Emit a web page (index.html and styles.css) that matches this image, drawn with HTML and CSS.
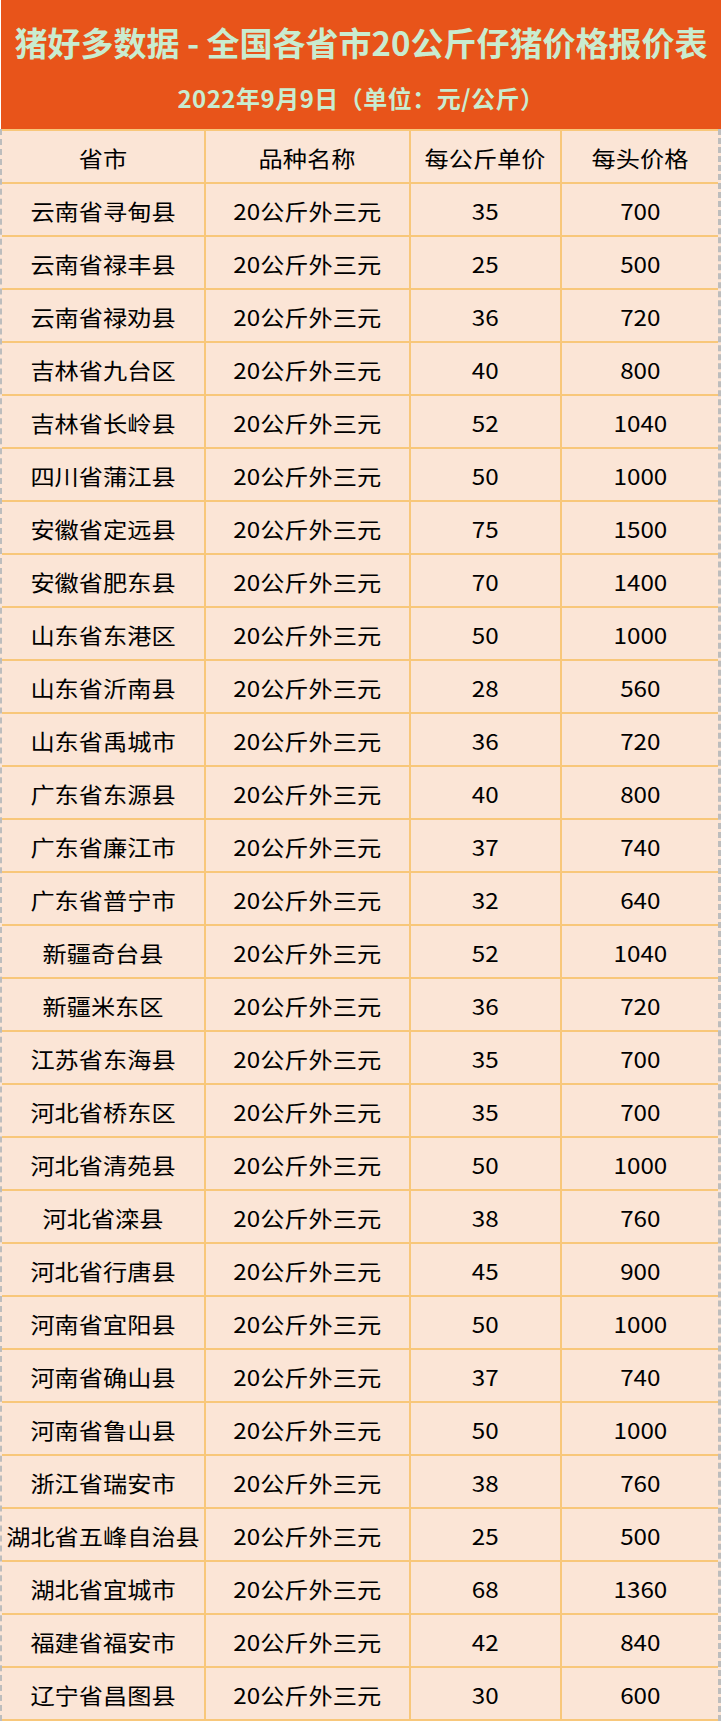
FILE: index.html
```html
<!DOCTYPE html>
<html lang="zh-CN">
<head>
<meta charset="utf-8">
<title>猪好多数据 - 全国各省市20公斤仔猪价格报价表</title>
<link rel="stylesheet" href="styles.css">
</head>
<body>
<div class="page">
  <header class="banner">
    <div class="title">猪好多数据 - 全国各省市20公斤仔猪价格报价表</div>
    <div class="subtitle">2022年9月9日（单位：元/公斤）</div>
  </header>
  <div class="sheet">
    <div class="grid">
      <div class="cell"><span>省市</span></div>
      <div class="cell"><span>品种名称</span></div>
      <div class="cell"><span>每公斤单价</span></div>
      <div class="cell"><span>每头价格</span></div>

      <div class="cell"><span>云南省寻甸县</span></div><div class="cell"><span>20公斤外三元</span></div><div class="cell"><span>35</span></div><div class="cell"><span>700</span></div>
      <div class="cell"><span>云南省禄丰县</span></div><div class="cell"><span>20公斤外三元</span></div><div class="cell"><span>25</span></div><div class="cell"><span>500</span></div>
      <div class="cell"><span>云南省禄劝县</span></div><div class="cell"><span>20公斤外三元</span></div><div class="cell"><span>36</span></div><div class="cell"><span>720</span></div>
      <div class="cell"><span>吉林省九台区</span></div><div class="cell"><span>20公斤外三元</span></div><div class="cell"><span>40</span></div><div class="cell"><span>800</span></div>
      <div class="cell"><span>吉林省长岭县</span></div><div class="cell"><span>20公斤外三元</span></div><div class="cell"><span>52</span></div><div class="cell"><span>1040</span></div>
      <div class="cell"><span>四川省蒲江县</span></div><div class="cell"><span>20公斤外三元</span></div><div class="cell"><span>50</span></div><div class="cell"><span>1000</span></div>
      <div class="cell"><span>安徽省定远县</span></div><div class="cell"><span>20公斤外三元</span></div><div class="cell"><span>75</span></div><div class="cell"><span>1500</span></div>
      <div class="cell"><span>安徽省肥东县</span></div><div class="cell"><span>20公斤外三元</span></div><div class="cell"><span>70</span></div><div class="cell"><span>1400</span></div>
      <div class="cell"><span>山东省东港区</span></div><div class="cell"><span>20公斤外三元</span></div><div class="cell"><span>50</span></div><div class="cell"><span>1000</span></div>
      <div class="cell"><span>山东省沂南县</span></div><div class="cell"><span>20公斤外三元</span></div><div class="cell"><span>28</span></div><div class="cell"><span>560</span></div>
      <div class="cell"><span>山东省禹城市</span></div><div class="cell"><span>20公斤外三元</span></div><div class="cell"><span>36</span></div><div class="cell"><span>720</span></div>
      <div class="cell"><span>广东省东源县</span></div><div class="cell"><span>20公斤外三元</span></div><div class="cell"><span>40</span></div><div class="cell"><span>800</span></div>
      <div class="cell"><span>广东省廉江市</span></div><div class="cell"><span>20公斤外三元</span></div><div class="cell"><span>37</span></div><div class="cell"><span>740</span></div>
      <div class="cell"><span>广东省普宁市</span></div><div class="cell"><span>20公斤外三元</span></div><div class="cell"><span>32</span></div><div class="cell"><span>640</span></div>
      <div class="cell"><span>新疆奇台县</span></div><div class="cell"><span>20公斤外三元</span></div><div class="cell"><span>52</span></div><div class="cell"><span>1040</span></div>
      <div class="cell"><span>新疆米东区</span></div><div class="cell"><span>20公斤外三元</span></div><div class="cell"><span>36</span></div><div class="cell"><span>720</span></div>
      <div class="cell"><span>江苏省东海县</span></div><div class="cell"><span>20公斤外三元</span></div><div class="cell"><span>35</span></div><div class="cell"><span>700</span></div>
      <div class="cell"><span>河北省桥东区</span></div><div class="cell"><span>20公斤外三元</span></div><div class="cell"><span>35</span></div><div class="cell"><span>700</span></div>
      <div class="cell"><span>河北省清苑县</span></div><div class="cell"><span>20公斤外三元</span></div><div class="cell"><span>50</span></div><div class="cell"><span>1000</span></div>
      <div class="cell"><span>河北省滦县</span></div><div class="cell"><span>20公斤外三元</span></div><div class="cell"><span>38</span></div><div class="cell"><span>760</span></div>
      <div class="cell"><span>河北省行唐县</span></div><div class="cell"><span>20公斤外三元</span></div><div class="cell"><span>45</span></div><div class="cell"><span>900</span></div>
      <div class="cell"><span>河南省宜阳县</span></div><div class="cell"><span>20公斤外三元</span></div><div class="cell"><span>50</span></div><div class="cell"><span>1000</span></div>
      <div class="cell"><span>河南省确山县</span></div><div class="cell"><span>20公斤外三元</span></div><div class="cell"><span>37</span></div><div class="cell"><span>740</span></div>
      <div class="cell"><span>河南省鲁山县</span></div><div class="cell"><span>20公斤外三元</span></div><div class="cell"><span>50</span></div><div class="cell"><span>1000</span></div>
      <div class="cell"><span>浙江省瑞安市</span></div><div class="cell"><span>20公斤外三元</span></div><div class="cell"><span>38</span></div><div class="cell"><span>760</span></div>
      <div class="cell"><span>湖北省五峰自治县</span></div><div class="cell"><span>20公斤外三元</span></div><div class="cell"><span>25</span></div><div class="cell"><span>500</span></div>
      <div class="cell"><span>湖北省宜城市</span></div><div class="cell"><span>20公斤外三元</span></div><div class="cell"><span>68</span></div><div class="cell"><span>1360</span></div>
      <div class="cell"><span>福建省福安市</span></div><div class="cell"><span>20公斤外三元</span></div><div class="cell"><span>42</span></div><div class="cell"><span>840</span></div>
      <div class="cell"><span>辽宁省昌图县</span></div><div class="cell"><span>20公斤外三元</span></div><div class="cell"><span>30</span></div><div class="cell"><span>600</span></div>
    </div>
  </div>
</div>
</body>
</html>
```
FILE: styles.css
```css
html, body {
  margin: 0;
  padding: 0;
  background: #ffffff;
}

.page {
  width: 721px;
  font-family: "Noto Sans CJK SC", "Noto Sans", sans-serif;
}

.banner {
  height: 129px;
  box-sizing: border-box;
  background: #e8541a;
  color: #c9ecd0;
  font-weight: 700;
  text-align: center;
  padding-top: 22px;
  margin-left: 1px;
}

.title {
  font-size: 33px;
  line-height: 40px;
  white-space: nowrap;
}

.subtitle {
  font-family: "Noto Sans CJK TC", "Noto Sans CJK SC", sans-serif;
  font-size: 24px;
  line-height: 30px;
  margin-top: 21px;
  letter-spacing: 0.5px;
  white-space: nowrap;
  text-spacing-trim: space-all;
}

.sheet {
  border-left: 2px dashed #bdbdbd;
  border-right: 3px dashed #bdbdbd;
  background: #fbe5d6;
}

.grid {
  display: grid;
  grid-template-columns: 202px 203px 149px 1fr;
  grid-auto-rows: 51px;
  column-gap: 2px;
  row-gap: 2px;
  padding: 2px 0;
  background: #f8c77a;
}

.cell {
  background: #fbe5d6;
  display: flex;
  align-items: center;
  justify-content: center;
  color: #000000;
  font-size: 22px;
  line-height: 30px;
  white-space: nowrap;
}

.cell span {
  display: inline-block;
  transform: scaleX(1.1);
}
```
